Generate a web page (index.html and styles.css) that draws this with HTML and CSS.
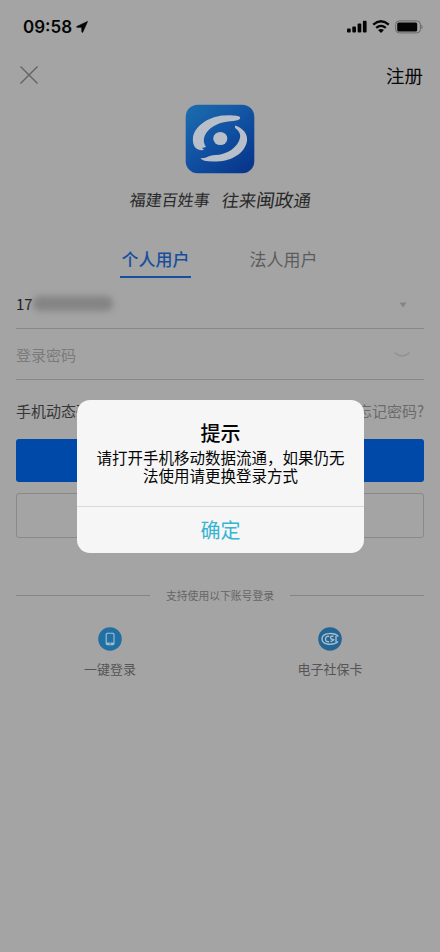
FILE: index.html
```html
<!DOCTYPE html>
<html lang="zh-CN">
<head>
<meta charset="utf-8">
<title>登录</title>
<link rel="stylesheet" href="styles.css">
</head>
<body>
<main class="screen">
  <header class="status">
    <div class="clock">09:58
      <svg class="arrow" width="13" height="12" viewBox="0 0 13 12"><path d="M11.5.5.9 5.500c-.5.3-.3.8.1.8h4.700l.2 4.700c0 .5.6.6.8.2z" stroke="#050505" stroke-width=".7"/></svg>
    </div>
    <div class="indicators">
      <svg width="20" height="13" viewBox="0 0 20 13"><rect x="0" y="8.5" width="3.7" height="4" rx="1"/><rect x="5.3" y="6.4" width="3.7" height="6.1" rx="1"/><rect x="10.6" y="3.4" width="3.7" height="9.1" rx="1"/><rect x="15.9" y=".7" width="3.7" height="11.8" rx="1"/></svg>
      <svg width="18" height="13" viewBox="0 0 18 13"><g fill="none" stroke="#050505" stroke-width="2.3"><path d="M1.2 4.7Q9-2.1 16.8 4.7M4.2 7.9Q9 3.8 13.8 7.9"/></g><path d="M6 10q3-2.2 6 0L9 12.9z"/></svg>
      <svg width="28" height="14" viewBox="0 0 28 14"><rect x=".6" y=".9" width="24.8" height="12" rx="3.6" fill="none" stroke="#686868"/><rect x="2.2" y="2.5" width="20" height="8.900" rx="1.500"/><path d="M26.5 4.6q2 2.3 0 4.600z" fill="#606060"/></svg>
    </div>
  </header>

  <nav class="nav">
    <svg width="20" height="20" viewBox="0 0 20 20"><path d="M1.5 1.5l17 17m0-17l-17 17" stroke="#636363" stroke-width="1.4" fill="none"/></svg>
    <span>注册</span>
  </nav>

  <svg class="logo" width="70" height="70" viewBox="0 0 70 70">
    <defs><linearGradient id="blue" x1="0" y1="0" x2=".8" y2="1"><stop offset="0" stop-color="#1c6eae"/><stop offset=".5" stop-color="#1253a3"/><stop offset="1" stop-color="#08378c"/></linearGradient></defs>
    <rect x=".7" y=".7" width="68.6" height="68.6" rx="12" fill="url(#blue)"/>
    <g fill="#b9bfc9">
      <path d="M55 13Q52 10.500 38 11.500C23 13 10 22 8 33C7 42 11 47 19 46L17 44L21 43C16 36 20 27 29 22C37 17 44 18 51 16.500Q56 15.500 55 13Z"/>
      <path d="M50 21.500C58 24 63 30 62 37C60 49 47 57 32 57.500Q17 58 15.500 54C21 55 24 51 30 51C42 51 53 43 55 34C56 29 53 26 50 24Z"/>
      <ellipse cx="35.3" cy="34.5" rx="7" ry="6.600"/>
    </g>
  </svg>
  <div class="slogan"><span>福建百姓事</span><span class="slogan-end">往来<b>闽政</b>通</span></div>

  <div class="tabs"><span class="tab tab-active">个人用户</span><span class="tab">法人用户</span></div>

  <section class="form">
    <div class="field"><div class="phone">17<i class="mask"></i></div>
      <svg class="caret" width="8" height="6" viewBox="0 0 8 6"><path d="M.5.5h7L4 5.5z" fill="#858585"/></svg></div>
    <div class="field password"><span>登录密码</span>
      <svg width="18" height="8" viewBox="0 0 18 8"><path d="M1.5 2.500q7.500 7 15 0" fill="none" stroke="#929292" stroke-width="1.5"/></svg></div>
    <div class="links"><span>手机动态码登录</span><span class="forgot">忘记密码?</span></div>
    <div class="primary"></div>
    <div class="secondary"></div>
  </section>

  <div class="divider"><i></i><span>支持使用以下账号登录</span><i></i></div>
  <section class="methods">
    <div class="method">
      <svg width="24" height="24" viewBox="0 0 24 24"><circle cx="12" cy="12" r="11.8" fill="#2170a5"/><rect x="8.2" y="6.3" width="7.8" height="11.4" rx="1.2" fill="none" stroke="#a9c0ce" stroke-width="1.1"/><path d="M8.5 15.6h7.2v2H8.5z" fill="#a9c0ce"/><circle cx="12.1" cy="16.7" r=".6" fill="#2170a5"/></svg>
      <span>一键登录</span>
    </div>
    <div class="method">
      <svg width="24" height="24" viewBox="0 0 24 24"><circle cx="12" cy="12" r="11.8" fill="#236595"/><g fill="none" stroke="#a9bdca" stroke-width="1.4"><path d="M20.300 9.500C17 5.500 4 5 4 12C4 18.500 16 18.500 20 14.500"/><path d="M11 9.200Q7.500 9 7.500 12t3.500 2.800M15.500 9.300q-3.500-.4-3 1.400t2.600 1.700-2.600 2.300M18 9v6"/></g></svg>
      <span>电子社保卡</span>
    </div>
  </section>

  <div class="dialog">
    <div class="message"><h1>提示</h1><p>请打开手机移动数据流通，如果仍无<br>法使用请更换登录方式</p></div>
    <div class="confirm">确定</div>
  </div>
</main>
</body>
</html>
```
FILE: styles.css
```css
* { box-sizing: border-box; }
body { margin: 0; font-family: "Noto Sans CJK SC", sans-serif; }
.screen { position: relative; display: flex; flex-direction: column; width: 440px; height: 952px; overflow: hidden; background: #a4a4a4; color: #222; }
svg { display: block; flex: none; }
.status { display: flex; justify-content: space-between; align-items: center; height: 53px; padding: 0 17px 0 23px; fill: #050505; }
.clock { display: flex; align-items: center; gap: 4px; font: 600 17px Inter, sans-serif; color: #050505; }
.indicators { display: flex; align-items: center; gap: 5px; }
.nav { display: flex; justify-content: space-between; align-items: center; height: 43px; padding: 0 17px 0 19px; font-size: 18.5px; line-height: 26px; color: #080808; }
.logo { margin: 8px auto 0 185px; }
.slogan { display: flex; gap: 12px; height: 30px; margin: 10px 0 0 130px; align-items: center; font-size: 16px; line-height: 30px; font-weight: 400; color: #292929; transform: skewX(-8deg); white-space: nowrap; }
.slogan-end { font-size: 17.3px; }
.slogan-end b { font-size: 18.6px; font-weight: 400; }
.tabs { display: flex; gap: 57px; margin: 31px 0 0 120px; height: 33px; }
.tab { width: 71px; height: 33px; font-size: 17px; line-height: 27px; text-align: center; color: #5c5c5c; white-space: nowrap; }
.tab-active { font-weight: 500; color: #174f9d; border-bottom: 2px solid #174f9d; }
.form { padding: 0 16px; }
.field { display: flex; justify-content: space-between; align-items: center; height: 51px; padding-right: 17px; border-bottom: 1px solid #888; font-size: 15px; }
.phone { display: flex; align-items: center; font-size: 15px; }
.mask { width: 80px; height: 15px; border-radius: 7px; background: #848484; filter: blur(3px); }
.caret { margin-top: 4px; }
.password { padding-right: 13px; color: #7b7b7b; }
.links { display: flex; justify-content: space-between; height: 59px; line-height: 62px; font-size: 15px; color: #363636; }
.links .forgot { color: #6b6b6b; }
.primary { height: 43px; border-radius: 3px; background: #0049a9; }
.secondary { height: 45px; margin-top: 11px; border: 1px solid #898989; border-radius: 3px; }
.divider { display: flex; align-items: center; gap: 16px; height: 20px; margin: 47px 16px 0; font-size: 10.8px; line-height: 18px; color: #666; white-space: nowrap; }
.divider i { flex: 1; height: 1px; background: #858585; }
.methods { display: grid; grid-template-columns: 1fr 1fr; margin-top: 22px; }
.method { display: flex; flex-direction: column; align-items: center; gap: 8px; font-size: 13px; line-height: 19px; color: #555; }
.dialog { position: absolute; left: 77px; top: 400px; width: 287px; height: 153px; border-radius: 13px; background: #f6f6f6; text-align: center; color: #050505; }
.message { height: 107px; padding-top: 20px; border-bottom: 1px solid #dadada; }
.message h1 { margin: 0; font-size: 20px; line-height: 26px; font-weight: 500; }
.message p { margin: 2px 0 0; font-size: 15.5px; line-height: 18px; white-space: nowrap; }
.confirm { font-size: 20px; line-height: 46px; color: #35b5d2; }
```
